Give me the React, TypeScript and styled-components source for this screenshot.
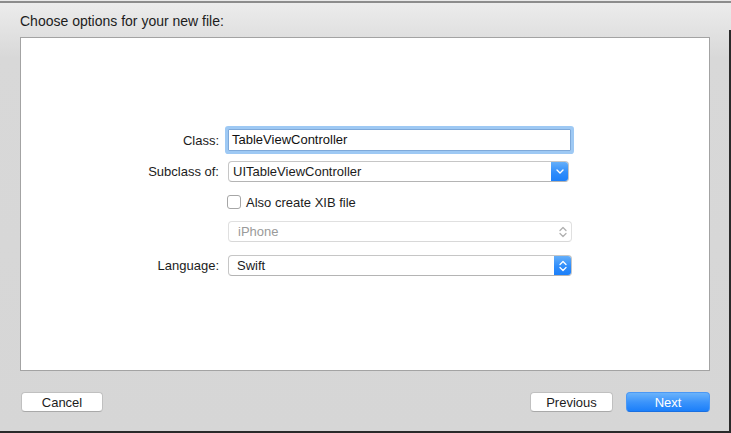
import React from "react";
import styled, { createGlobalStyle } from "styled-components";

const GlobalStyle = createGlobalStyle`
  html, body { margin: 0; padding: 0; background: #e9e9e9; }
  body { font-family: "Liberation Sans", Arial, sans-serif; }
  * { box-sizing: border-box; }
`;

const Window = styled.div`
  position: relative;
  width: 731px;
  height: 432px;
  margin-top: 1px;
  border-top: 2px solid #8c8c8c;
  border-bottom: 2px solid #2a2a2a;
  background: linear-gradient(#ececec 0px, #e3e3e3 25px, #d8d8d8 55px, #d6d6d6 100%);
  display: flex;
  flex-direction: column;
  padding: 0 21px 0 20px;
  &::after {
    content: "";
    position: absolute;
    right: 0;
    top: 27px;
    bottom: 0;
    width: 2px;
    background: #2a2a2a;
  }
`;

const Title = styled.div`
  padding-top: 10px;
  height: 34px;
  font-size: 14px;
  line-height: 16px;
  color: #1c1c1c;
`;

const Panel = styled.div`
  height: 334px;
  background: #fff;
  border: 1px solid #a3a3a3;
  padding-top: 91px;
  display: flex;
  flex-direction: column;
`;

const Row = styled.div<{ $gap: number; $h: number }>`
  display: flex;
  align-items: center;
  height: ${(p) => p.$h}px;
  margin-top: ${(p) => p.$gap}px;
`;

const Label = styled.div`
  width: 198px;
  margin-right: 9px;
  text-align: right;
  font-size: 13px;
  color: #1c1c1c;
`;

const TextField = styled.div`
  width: 343px;
  height: 22px;
  border: 1px solid #7fa9d9;
  box-shadow: 0 0 0 3px #9ec9f4;
  border-radius: 1px;
  background: #fff;
  font-size: 13px;
  line-height: 20px;
  padding-left: 3px;
  color: #111;
`;

const Popup = styled.div<{ $w: number; $disabled?: boolean }>`
  display: flex;
  align-items: stretch;
  width: ${(p) => p.$w}px;
  height: 21px;
  border: 1px solid ${(p) => (p.$disabled ? "#e0e0e0" : "#c6c6c6")};
  border-bottom-color: ${(p) => (p.$disabled ? "#d8d8d8" : "#b4b4b4")};
  border-radius: 4px;
  background: #fff;
  overflow: hidden;
  font-size: 13px;
  color: ${(p) => (p.$disabled ? "#9a9a9a" : "#1c1c1c")};
`;

const PopupText = styled.div<{ $pad: number }>`
  flex: 1;
  padding-left: ${(p) => p.$pad}px;
  line-height: 19px;
`;

const BlueCap = styled.div<{ $w: number }>`
  width: ${(p) => p.$w}px;
  margin: -1px -1px -1px 0;
  background: linear-gradient(#6ab2f9, #2f8dfb 55%, #1a7ef9);
  display: flex;
  align-items: center;
  justify-content: center;
  border-radius: 0 4px 4px 0;
`;

const PlainCap = styled.div`
  width: 17px;
  display: flex;
  align-items: center;
  justify-content: center;
`;

const Checkbox = styled.div`
  width: 14px;
  height: 14px;
  margin-left: -1px;
  border: 1px solid #a6a6a6;
  border-radius: 3px;
  background: #fff;
  margin-right: 5px;
`;

const CheckLabel = styled.div`
  font-size: 13px;
  color: #1c1c1c;
`;

const Footer = styled.div`
  display: flex;
  align-items: center;
  padding-top: 21px;
  gap: 13px;
`;

const Button = styled.div<{ $primary?: boolean; $w: number }>`
  width: ${(p) => p.$w}px;
  height: 20px;
  border-radius: 4px;
  font-size: 13px;
  line-height: 19px;
  text-align: center;
  color: ${(p) => (p.$primary ? "#fff" : "#1c1c1c")};
  background: ${(p) =>
    p.$primary ? "linear-gradient(#6ab3fb, #3c94fb 50%, #1b7ffa)" : "#fff"};
  border: 1px solid ${(p) => (p.$primary ? "#4a98f5" : "#c0c0c0")};
  border-bottom-color: ${(p) => (p.$primary ? "#1a6fe0" : "#a9a9a9")};
`;

const Spacer = styled.div`
  flex: 1;
`;

const CancelButton = styled(Button)`
  margin-left: 1px;
`;

const ChevronDown = () => (
  <svg width="8" height="5" viewBox="0 0 8 5">
    <path d="M1 1 L4 4 L7 1" fill="none" stroke="#fff" strokeWidth="1.4" strokeLinecap="round" strokeLinejoin="round" />
  </svg>
);

const Stepper = ({ color }: { color: string }) => (
  <svg width="8" height="12" viewBox="0 0 8 12">
    <path d="M1 4.5 L4 1.5 L7 4.5" fill="none" stroke={color} strokeWidth="1.3" strokeLinecap="round" strokeLinejoin="round" />
    <path d="M1 7.5 L4 10.5 L7 7.5" fill="none" stroke={color} strokeWidth="1.3" strokeLinecap="round" strokeLinejoin="round" />
  </svg>
);

export default function App() {
  return (
    <>
      <GlobalStyle />
      <Window>
        <Title>Choose options for your new file:</Title>
        <Panel>
          <Row $gap={0} $h={22}>
            <Label>Class:</Label>
            <TextField>TableViewController</TextField>
          </Row>
          <Row $gap={10} $h={21}>
            <Label>Subclass of:</Label>
            <Popup $w={341}>
              <PopupText $pad={4}>UITableViewController</PopupText>
              <BlueCap $w={18}>
                <ChevronDown />
              </BlueCap>
            </Popup>
          </Row>
          <Row $gap={9} $h={22}>
            <Label />
            <Checkbox />
            <CheckLabel>Also create XIB file</CheckLabel>
          </Row>
          <Row $gap={8} $h={21}>
            <Label />
            <Popup $w={344} $disabled>
              <PopupText $pad={9}>iPhone</PopupText>
              <PlainCap>
                <Stepper color="#b0b0b0" />
              </PlainCap>
            </Popup>
          </Row>
          <Row $gap={13} $h={21}>
            <Label>Language:</Label>
            <Popup $w={344}>
              <PopupText $pad={8}>Swift</PopupText>
              <BlueCap $w={18}>
                <Stepper color="#fff" />
              </BlueCap>
            </Popup>
          </Row>
        </Panel>
        <Footer>
          <CancelButton $w={82}>Cancel</CancelButton>
          <Spacer />
          <Button $w={83}>Previous</Button>
          <Button $w={84} $primary>
            Next
          </Button>
        </Footer>
      </Window>
    </>
  );
}
